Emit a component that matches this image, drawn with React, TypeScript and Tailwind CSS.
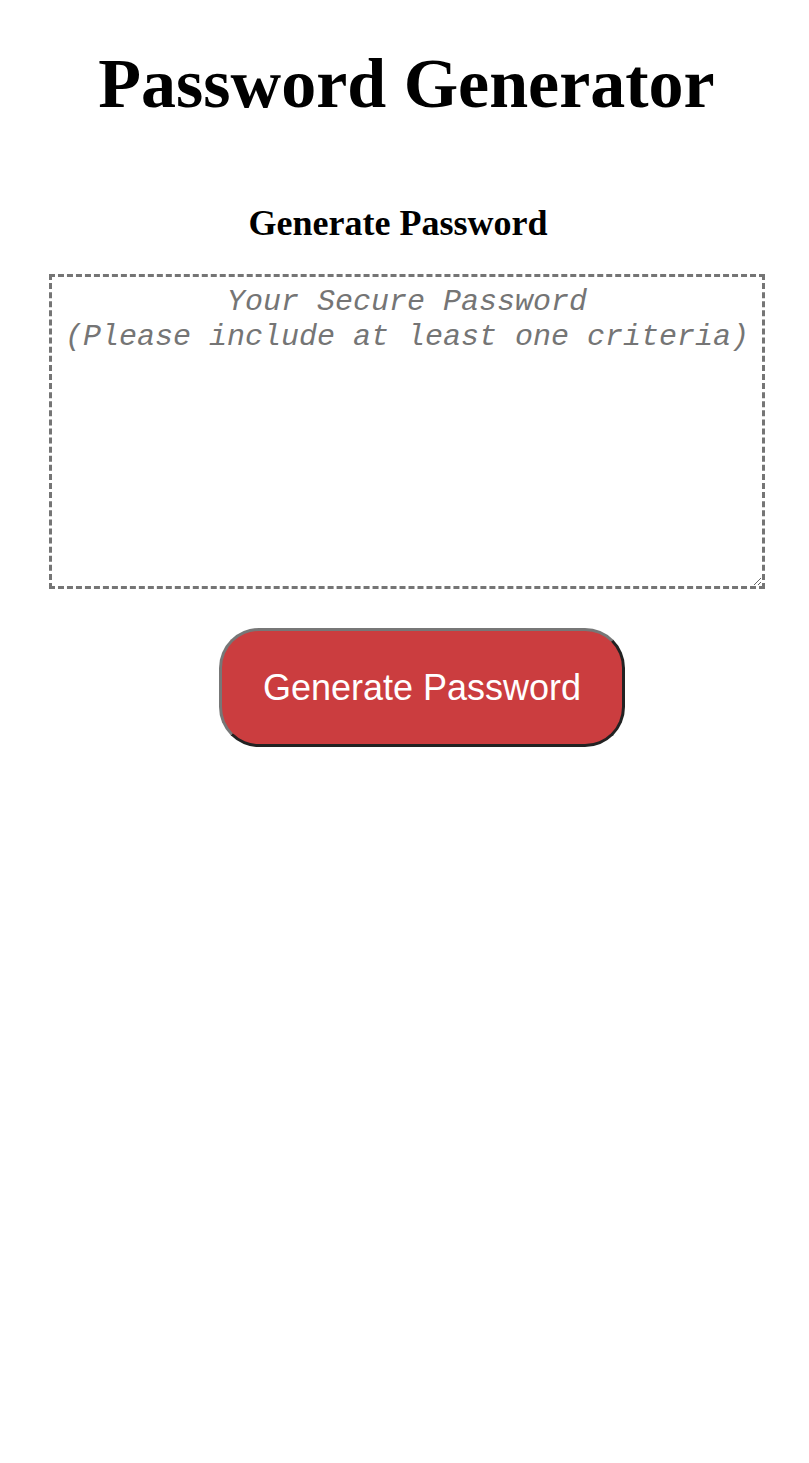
export default function App() {
  return (
    <div className="min-h-[1463px] bg-white text-black [font-family:'Liberation_Serif',serif]">
      <h1 className="pl-[4px] pt-[44px] text-center text-[70px] font-bold leading-[1.15]">Password Generator</h1>
      <div className="mt-[80px] flex flex-col pl-[49px] pr-[44px]">
        <h2 className="self-center mr-[18px] text-[36px] font-bold leading-none">Generate Password</h2>
        <textarea
          readOnly
          placeholder={"Your Secure Password\n(Please include at least one criteria)"}
          className="mt-[33px] h-[315px] w-full resize-y border-[3px] border-dashed border-[#757575] p-[8px] text-center text-[30px] italic leading-[35px] placeholder:text-[#757575] [font-family:'Liberation_Mono',monospace]"
        />
        <button className="ml-[170px] mt-[39px] h-[119px] w-[406px] rounded-[40px] border-[3px] border-t-[#777777] border-l-[#777777] border-b-[#222222] border-r-[#222222] bg-[#cb3d3f] pt-[2px] text-[36px] text-white [font-family:'Liberation_Sans',sans-serif]">
          Generate Password
        </button>
      </div>
    </div>
  );
}
